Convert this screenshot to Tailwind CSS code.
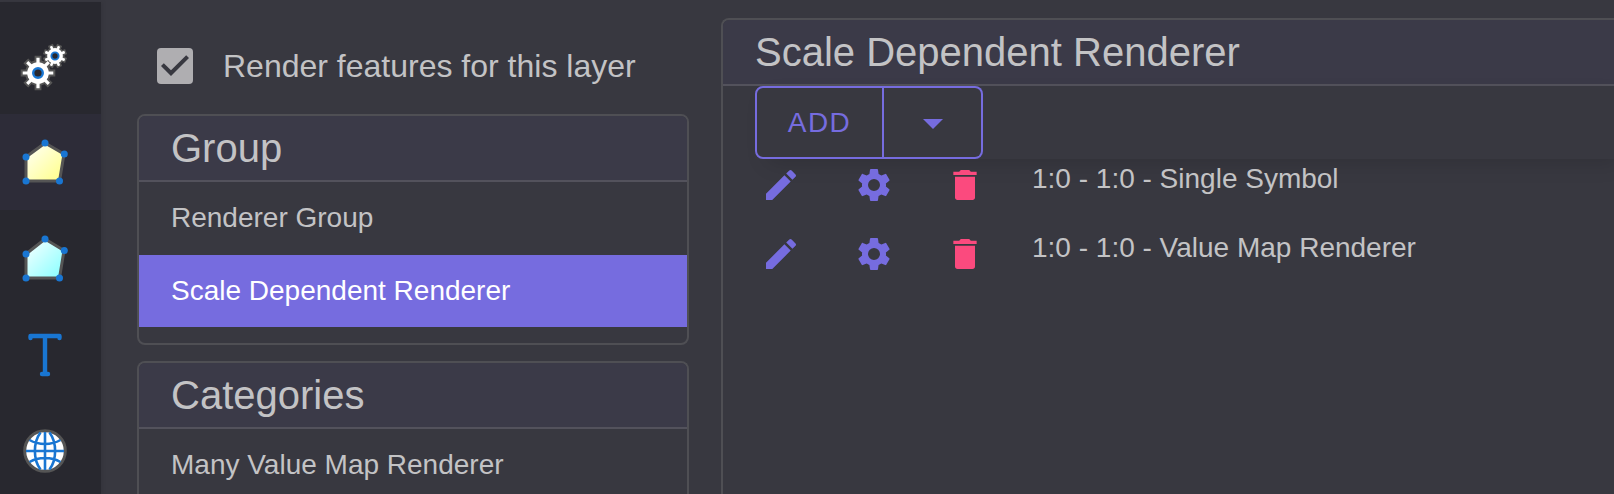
<!DOCTYPE html>
<html lang="en">
<head>
<meta charset="utf-8">
<meta name="viewport" content="width=device-width, initial-scale=1">
<title>Layer Renderer</title>
<script src="https://cdn.jsdelivr.net/npm/@tailwindcss/browser@4"></script>
</head>
<body class="flex h-screen overflow-hidden bg-[#383840] font-['Liberation_Sans',Arial,sans-serif] text-[28px] leading-8 text-[#c3c3c5]">
<svg class="hidden" aria-hidden="true">
  <defs>
    <symbol id="edit" viewBox="0 0 24 24"><path d="M3 17.250V21h3.750L17.810 9.940l-3.750-3.750L3 17.250zM20.710 7.040c.39-.39.39-1.020 0-1.410l-2.340-2.340a.996.996 0 0 0-1.410 0l-1.830 1.830 3.750 3.750 1.830-1.830z"/></symbol>
    <symbol id="settings" viewBox="0 0 24 24"><path d="M19.140 12.940c.04-.3.06-.61.06-.94 0-.32-.02-.64-.07-.94l2.030-1.580a.49.49 0 0 0 .12-.61l-1.920-3.320a.488.488 0 0 0-.59-.22l-2.390.96c-.5-.38-1.030-.7-1.620-.94l-.36-2.540a.484.484 0 0 0-.48-.41h-3.840c-.24 0-.43.17-.47.41l-.36 2.540c-.59.24-1.130.57-1.620.94l-2.390-.96c-.22-.08-.47 0-.59.22L2.740 8.870c-.12.21-.08.47.12.61l2.030 1.580c-.05.3-.09.63-.09.94s.02.64.07.94l-2.030 1.580a.49.49 0 0 0-.12.61l1.920 3.320c.12.22.37.29.59.22l2.390-.96c.5.38 1.030.7 1.620.94l.36 2.540c.05.24.24.41.48.41h3.840c.24 0 .44-.17.47-.41l.36-2.540c.59-.24 1.130-.56 1.620-.94l2.390.96c.22.08.47 0 .59-.22l1.920-3.320c.12-.22.07-.47-.12-.61l-2.010-1.580zM12 15.600A3.600 3.600 0 1 1 12 8.400a3.600 3.600 0 0 1 0 7.200z"/></symbol>
    <symbol id="delete" viewBox="0 0 24 24"><path d="M6 19.500c0 .9.700 1.500 1.500 1.500h9c.9 0 1.500-.7 1.500-1.500V7H6v12.500zM19 4h-3.500l-1-1h-5l-1 1H5v2h14V4z"/></symbol>
  </defs>
</svg>

<nav aria-label="Style sections" class="mt-0.5 flex w-[101px] shrink-0 flex-col overflow-hidden bg-[#28282f] pt-4 shadow-[2px_0_4px_rgba(0,0,0,0.08)]">
  <button type="button" aria-label="General" class="flex h-24 shrink-0 items-center pl-[21px]">
    <svg class="size-12 overflow-visible" viewBox="0 0 48 48" fill="none">
      <g stroke="#555" stroke-width="6.800"><path d="M17 13.700v34.600M-.3 31h34.600M4.800 18.800l24.400 24.400M4.800 43.200l24.400-24.400"/><circle cx="17" cy="31" r="9.500"/></g>
      <g stroke="#555" stroke-width="5.400"><path d="M29.400 2.900l9.200 22.200M38.600 2.900l-9.200 22.200M22.900 9.400l22.200 9.200M22.900 18.600l22.200-9.200"/><circle cx="34" cy="14" r="7"/></g>
      <g stroke="#fff" stroke-width="3.200"><path d="M17 15.700v30.600M1.700 31h30.600M6.200 20.200l21.600 21.600M6.200 41.800l21.600-21.600"/></g>
      <g stroke="#fff" stroke-width="2.500"><path d="M30 4.300l8 19.400M38 4.300l-8 19.400M24.300 10l19.400 8M24.300 18l19.400-8"/></g>
      <circle cx="17" cy="31" r="10.800" fill="#fff"/><circle cx="34" cy="14" r="7.900" fill="#fff"/>
      <circle cx="17" cy="31" r="4.800" fill="#28282f" stroke="#1976d2" stroke-width="2.400"/>
      <circle cx="34" cy="14" r="3.600" fill="#28282f" stroke="#1976d2" stroke-width="1.900"/>
    </svg>
  </button>
  <button type="button" aria-label="Geometry" aria-current="page" class="flex h-24 shrink-0 items-center bg-[#2d2c38] pl-[21px]">
    <svg class="size-12" viewBox="0 0 48 48">
      <linearGradient id="yellow" x1="0" y1="0" x2="1" y2="1"><stop offset="0.1" stop-color="#fffff0"/><stop offset="0.9" stop-color="#ffff90"/></linearGradient>
      <path d="M5 19L24 5l19 11-4.500 27H5z" fill="url(#yellow)" stroke="#555" stroke-width="3"/>
      <g fill="#1976d2"><circle cx="5" cy="19" r="3.500"/><circle cx="24" cy="5" r="3.500"/><circle cx="43.300" cy="16" r="3.500"/><circle cx="38.500" cy="43" r="3.500"/><circle cx="5" cy="43" r="3.500"/></g>
    </svg>
  </button>
  <button type="button" aria-label="Selected geometry" class="flex h-24 shrink-0 items-center pl-[21px]">
    <svg class="size-12" viewBox="0 0 48 48">
      <linearGradient id="cyan" x1="0" y1="0" x2="1" y2="1"><stop offset="0.1" stop-color="#f0ffff"/><stop offset="0.9" stop-color="#90ffff"/></linearGradient>
      <path d="M5 20L24 5l19 11.500L38.500 44H5z" fill="url(#cyan)" stroke="#555" stroke-width="3"/>
      <g fill="#1976d2"><circle cx="5" cy="20" r="3.500"/><circle cx="24" cy="5" r="3.500"/><circle cx="43.300" cy="16.500" r="3.500"/><circle cx="38.500" cy="44" r="3.500"/><circle cx="5" cy="44" r="3.500"/></g>
    </svg>
  </button>
  <button type="button" aria-label="Labels" class="flex h-24 shrink-0 items-center pl-[21px]">
    <svg class="size-12" viewBox="0 0 48 48" fill="none" stroke="#1976d2" stroke-width="4.400" stroke-linecap="round" stroke-linejoin="round"><path d="M9.500 8V6h29v2M24 6v38M21 44h6"/></svg>
  </button>
  <button type="button" aria-label="Map" class="flex h-24 shrink-0 items-center pl-[21px]">
    <svg class="size-12" viewBox="0 0 48 48" fill="none">
      <circle cx="24" cy="25" r="20.300" fill="#fff" stroke="#555" stroke-width="3"/>
      <path stroke="#1976d2" stroke-width="2.600" d="M24 6v38M5 25h38M19.500 6.500c-7.500 10-7.500 27 0 37M28.500 6.500c7.500 10 7.500 27 0 37M8.500 14c9 5.300 22 5.300 31 0M8.500 36c9-5.300 22-5.300 31 0"/>
    </svg>
  </button>
</nav>

<main class="flex min-w-0 flex-1 items-stretch gap-8 pl-9">
  <section class="flex w-[552px] shrink-0 flex-col gap-4 overflow-hidden pt-[42px]">
    <label class="mb-2 flex h-12 shrink-0 items-center gap-6 pl-5 text-[32px]">
      <span class="relative size-9 shrink-0">
        <input type="checkbox" checked class="block size-9 appearance-none rounded-[4px] bg-[#afaeb1]">
        <svg class="pointer-events-none absolute inset-0 size-9" viewBox="3 3 18 18" fill="#383840" aria-hidden="true"><path d="M10 17l-5-5 1.410-1.410L10 14.170l7.590-7.590L19 8z"/></svg>
      </span>
      <span class="pl-1.5">Render features for this layer</span>
    </label>
    <section class="shrink-0 overflow-hidden rounded-lg border-2 border-[#4f4f54] pb-4">
      <h2 class="flex h-[66px] items-center border-b-2 border-[#53525c] bg-[#3b3a48] px-8 text-[40px]">Group</h2>
      <ul class="flex flex-col gap-px">
        <li><button type="button" class="h-[72px] w-full px-8 text-left">Renderer Group</button></li>
        <li><button type="button" aria-current="true" class="h-[72px] w-full bg-[#766cdf] px-8 text-left text-white">Scale Dependent Renderer</button></li>
      </ul>
    </section>
    <section class="min-h-0 flex-1 overflow-hidden rounded-t-lg border-2 border-b-0 border-[#4f4f54]">
      <h2 class="flex h-[66px] items-center border-b-2 border-[#53525c] bg-[#3b3a48] px-8 text-[40px]">Categories</h2>
      <ul class="flex flex-col gap-px">
        <li><button type="button" class="block h-[72px] w-full px-8 text-left">Many Value Map Renderer</button></li>
      </ul>
    </section>
  </section>

  <section class="mt-[18px] min-w-0 flex-1 overflow-hidden rounded-tl-lg border-t-2 border-l-2 border-[#4f4f54]">
    <h2 class="flex h-[66px] items-center border-b-2 border-[#53525c] bg-[#3b3a48] px-8 text-[40px]">Scale Dependent Renderer</h2>
    <div class="pl-8">
      <div class="flex h-[73px] bg-[#383840] text-[#766cdf] shadow-[8px_8px_20px_-4px_rgba(0,0,0,0.14)]">
        <button type="button" class="w-[129px] rounded-l-lg border-2 border-[#766cdf] tracking-wider">ADD</button>
        <button type="button" aria-label="More renderers" class="flex w-[99px] items-center justify-center rounded-r-lg border-2 border-l-0 border-[#766cdf]">
          <svg class="size-12" viewBox="0 0 24 24" fill="currentColor"><path d="M7 10l5 5 5-5z"/></svg>
        </button>
      </div>
      <ul>
        <li class="flex h-[69px] pt-1.5 pl-1.5">
          <button type="button" aria-label="Edit" class="size-10 text-[#766cdf]"><svg class="size-10" fill="currentColor"><use href="#edit"/></svg></button>
          <button type="button" aria-label="Settings" class="ml-[53px] size-10 text-[#766cdf]"><svg class="size-10" fill="currentColor"><use href="#settings"/></svg></button>
          <button type="button" aria-label="Delete" class="ml-[51px] size-10 text-[#fb4a7e]"><svg class="size-10" fill="currentColor"><use href="#delete"/></svg></button>
          <span class="-mt-0.5 ml-[47px]">1:0 - 1:0 - Single Symbol</span>
        </li>
        <li class="flex h-[69px] pt-1.5 pl-1.5">
          <button type="button" aria-label="Edit" class="size-10 text-[#766cdf]"><svg class="size-10" fill="currentColor"><use href="#edit"/></svg></button>
          <button type="button" aria-label="Settings" class="ml-[53px] size-10 text-[#766cdf]"><svg class="size-10" fill="currentColor"><use href="#settings"/></svg></button>
          <button type="button" aria-label="Delete" class="ml-[51px] size-10 text-[#fb4a7e]"><svg class="size-10" fill="currentColor"><use href="#delete"/></svg></button>
          <span class="-mt-0.5 ml-[47px]">1:0 - 1:0 - Value Map Renderer</span>
        </li>
      </ul>
    </div>
  </section>
</main>
</body>
</html>
